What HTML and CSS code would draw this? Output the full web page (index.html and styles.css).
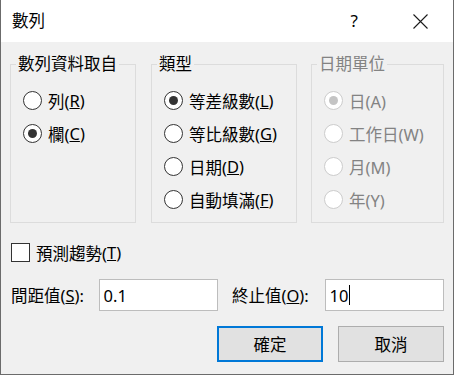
FILE: index.html
```html
<!DOCTYPE html>
<html lang="zh-Hant">
<head>
    <meta charset="UTF-8">
    <meta name="viewport" content="width=device-width, initial-scale=1.0">
    <title>數列</title>
    <link rel="stylesheet" href="styles.css">
</head>
<body>
    <div class="dialog">
        <div class="titlebar">
            <span class="title">數列</span>
            <span class="help">?</span>
            <span class="close">
                <svg width="15" height="15" viewBox="0 0 15 15">
                    <path d="M0.5 0.5 L14.5 14.5 M14.5 0.5 L0.5 14.5" stroke="#1a1a1a" stroke-width="1.1" fill="none"/>
                </svg>
            </span>
        </div>
        <div class="content">
            <div class="groups">
                <fieldset class="group group-source">
                    <legend>數列資料取自</legend>
                    <div class="option"><span class="radio"></span>列(<u>R</u>)</div>
                    <div class="option"><span class="radio checked"></span>欄(<u>C</u>)</div>
                </fieldset>
                <fieldset class="group group-type">
                    <legend>類型</legend>
                    <div class="option"><span class="radio checked"></span>等差級數(<u>L</u>)</div>
                    <div class="option"><span class="radio"></span>等比級數(<u>G</u>)</div>
                    <div class="option"><span class="radio"></span>日期(<u>D</u>)</div>
                    <div class="option"><span class="radio"></span>自動填滿(<u>F</u>)</div>
                </fieldset>
                <fieldset class="group group-unit disabled">
                    <legend>日期單位</legend>
                    <div class="option"><span class="radio checked"></span>日(A)</div>
                    <div class="option"><span class="radio"></span>工作日(W)</div>
                    <div class="option"><span class="radio"></span>月(M)</div>
                    <div class="option"><span class="radio"></span>年(Y)</div>
                </fieldset>
            </div>

            <div class="trend">
                <span class="checkbox"></span>預測趨勢(<u>T</u>)
            </div>

            <div class="values">
                <span class="label label-step">間距值(<u>S</u>):</span>
                <div class="field">0.1</div>
                <span class="label label-stop">終止值(<u>O</u>):</span>
                <div class="field">10<span class="caret"></span></div>
            </div>

            <div class="buttons">
                <div class="button default">確定</div>
                <div class="button">取消</div>
            </div>
        </div>
    </div>
</body>
</html>
```

FILE: styles.css
```css
body {
    margin: 0;
    font-family: "Noto Sans", "Noto Sans CJK TC", sans-serif;
    font-size: 16.5px;
    color: #000;
    background-color: #fff;
}
.dialog {
    width: 454px;
    height: 375px;
    box-sizing: border-box;
    border: 1px solid #6b6b6b;
    border-top: none;
    background-color: #f0f0f0;
    display: flex;
    flex-direction: column;
}
.titlebar {
    height: 42px;
    background-color: #fff;
    display: flex;
    align-items: center;
    padding-left: 11px;
}
.title {
    flex: 1;
    line-height: 20px;
}
.help {
    font-size: 17px;
    line-height: 20px;
    margin-right: 55px;
}
.close {
    display: flex;
    margin-right: 25px;
}
.content {
    padding: 12px 9px 0 9px;
}
.groups {
    display: flex;
}
.group {
    margin: 0;
    padding: 10px 0 0 12px;
    border: 1px solid #dcdcdc;
    height: 169px;
    box-sizing: border-box;
    min-width: 0;
}
.group legend {
    padding: 0 2px;
    margin-left: -7px;
    line-height: 20px;
}
.group-source {
    width: 126px;
}
.group-type {
    width: 146px;
    margin-left: 15px;
}
.group-unit {
    width: 133px;
    margin-left: 14px;
}
.option {
    display: flex;
    align-items: center;
    height: 33px;
    white-space: nowrap;
}
.radio {
    width: 19px;
    height: 19px;
    box-sizing: border-box;
    border: 1px solid #333;
    border-radius: 50%;
    background-color: #fff;
    margin-right: 6px;
    display: flex;
    align-items: center;
    justify-content: center;
}
.radio.checked::after {
    content: "";
    width: 9px;
    height: 9px;
    border-radius: 50%;
    background-color: #333;
}
.disabled legend,
.disabled .option {
    color: #838383;
}
.disabled .radio {
    border-color: #cccccc;
}
.disabled .radio.checked::after {
    background-color: #c4c4c4;
}
.trend {
    display: flex;
    align-items: center;
    margin-top: 20px;
    margin-left: 1px;
    height: 19px;
}
.checkbox {
    width: 19px;
    height: 19px;
    box-sizing: border-box;
    border: 1px solid #333;
    background-color: #fff;
    margin-right: 6px;
}
.values {
    display: flex;
    align-items: center;
    margin-top: 17px;
    margin-left: 1px;
}
.label {
    white-space: nowrap;
}
.label-step {
    width: 88px;
}
.label-stop {
    width: 93px;
    margin-left: 14px;
}
.field {
    width: 120px;
    height: 32px;
    box-sizing: border-box;
    border: 1px solid #bdbdbd;
    background-color: #fff;
    padding: 0 4px;
    display: flex;
    align-items: center;
}
.caret {
    display: inline-block;
    width: 1px;
    height: 20px;
    background-color: #000;
    margin-left: 1px;
}
.buttons {
    display: flex;
    justify-content: flex-end;
    gap: 15px;
    margin-top: 15px;
}
.button {
    width: 106px;
    height: 36px;
    box-sizing: border-box;
    border: 1px solid #adadad;
    background-color: #e1e1e1;
    display: flex;
    align-items: center;
    justify-content: center;
}
.button.default {
    border: 2px solid #0078d7;
}
```
